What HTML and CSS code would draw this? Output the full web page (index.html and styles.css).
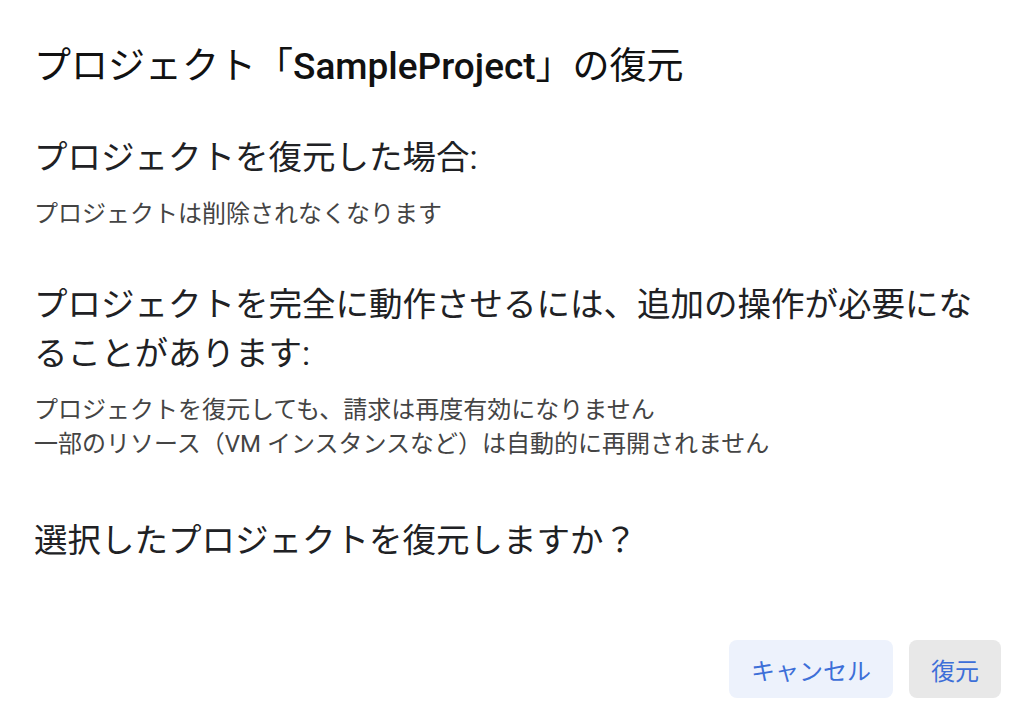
FILE: index.html
```html
<!DOCTYPE html>
<html lang="ja">
<head>
  <meta charset="UTF-8" />
  <title>プロジェクトの復元</title>
  <link rel="stylesheet" href="styles.css">
</head>
<body>

  <div class="dialog">
    <h1 class="title">プロジェクト「<span class="name">SampleProject</span>」の復元</h1>

    <!-- What happens -->
    <div class="section">
      <h2>プロジェクトを復元した場合:</h2>
      <p>プロジェクトは削除されなくなります</p>
    </div>

    <!-- Extra steps -->
    <div class="section">
      <h2>プロジェクトを完全に動作させるには、追加の操作が必要になることがあります:</h2>
      <p>プロジェクトを復元しても、請求は再度有効になりません<br>一部のリソース（VM インスタンスなど）は自動的に再開されません</p>
    </div>

    <p class="question">選択したプロジェクトを復元しますか？</p>

    <div class="actions">
      <button class="btn cancel">キャンセル</button>
      <button class="btn restore">復元</button>
    </div>
  </div>

</body>
</html>
```

FILE: styles.css
```css
body {
  margin: 0;
  background: #ffffff;
  font-family: Roboto, "Noto Sans CJK JP", sans-serif;
  color: #202124;
}

.dialog {
  padding: 40px 23px 28px 34px;
}

.title {
  margin: 0;
  font-size: 37px;
  font-weight: 400;
  line-height: 54px;
  color: #111111;
}

.title .name {
  font-weight: 500;
}

.section {
  margin-top: 39px;
}

h2 {
  margin: 0;
  font-size: 33.5px;
  font-weight: 400;
  line-height: 49px;
}

p {
  margin: 0;
}

.section p {
  margin-top: 15px;
  font-size: 24px;
  line-height: 34px;
  color: #444444;
}

.section + .section {
  margin-top: 49px;
}

.question {
  margin-top: 55px;
  font-size: 33.5px;
  line-height: 49px;
}

.actions {
  display: flex;
  justify-content: flex-end;
  gap: 16px;
  margin-top: 75px;
}

.btn {
  height: 58px;
  padding: 0 22px;
  border: none;
  border-radius: 8px;
  font-family: inherit;
  font-size: 24px;
  color: #3d6fd8;
  cursor: pointer;
}

.cancel {
  background-color: #edf2fc;
}

.restore {
  background-color: #e8e8e8;
}
```
